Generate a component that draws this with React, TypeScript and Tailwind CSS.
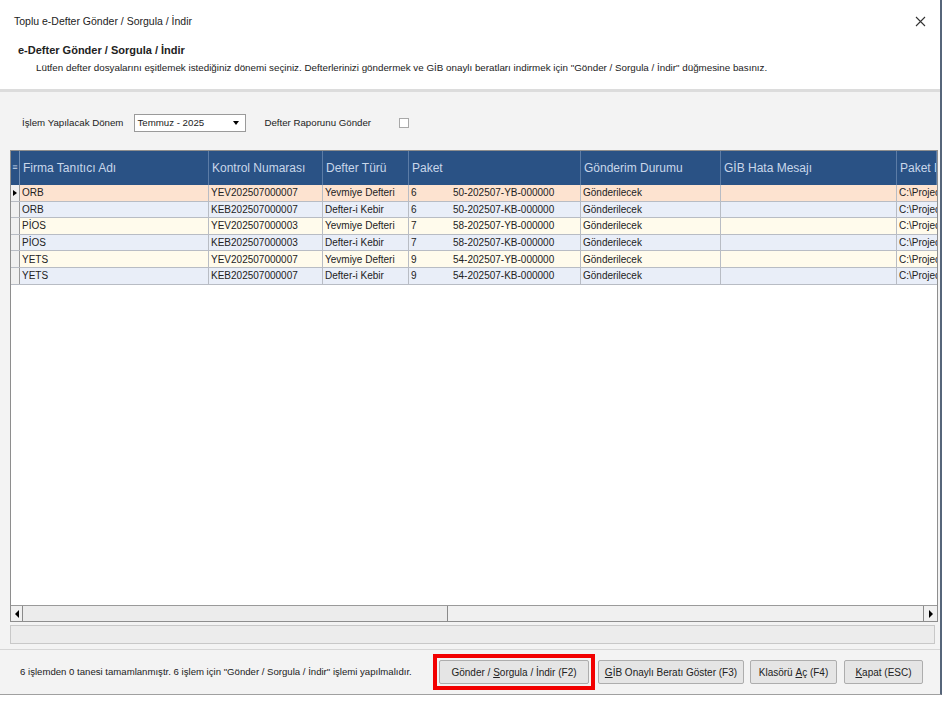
const rows = [
  { firma: "ORB", kontrol: "YEV202507000007", tur: "Yevmiye Defteri", no: "6", paket: "50-202507-YB-000000", bg: "bg-[#fde3d0]", sel: true },
  { firma: "ORB", kontrol: "KEB202507000007", tur: "Defter-i Kebir", no: "6", paket: "50-202507-KB-000000", bg: "bg-[#e9eef8]" },
  { firma: "PİOS", kontrol: "YEV202507000003", tur: "Yevmiye Defteri", no: "7", paket: "58-202507-YB-000000", bg: "bg-[#fffbec]" },
  { firma: "PİOS", kontrol: "KEB202507000003", tur: "Defter-i Kebir", no: "7", paket: "58-202507-KB-000000", bg: "bg-[#e9eef8]" },
  { firma: "YETS", kontrol: "YEV202507000007", tur: "Yevmiye Defteri", no: "9", paket: "54-202507-YB-000000", bg: "bg-[#fffbec]" },
  { firma: "YETS", kontrol: "KEB202507000007", tur: "Defter-i Kebir", no: "9", paket: "54-202507-KB-000000", bg: "bg-[#e9eef8]" },
];

const cols = [
  { title: "Firma Tanıtıcı Adı", w: "w-[189px]" },
  { title: "Kontrol Numarası", w: "w-[114px]" },
  { title: "Defter Türü", w: "w-[86px]" },
  { title: "Paket", w: "w-[172px]" },
  { title: "Gönderim Durumu", w: "w-[140px]" },
  { title: "GİB Hata Mesajı", w: "w-[176px]" },
  { title: "Paket D", w: "flex-1" },
];

function Btn({ children, w }: { children: React.ReactNode; w: string }) {
  return (
    <button className={`${w} h-[24px] border border-[#adadad] bg-[#e5e5e5] rounded-[2px] text-[10px] text-[#222] flex items-center justify-center whitespace-pre`}>
      {children}
    </button>
  );
}

export default function App() {
  return (
    <div className="w-[946px] h-[704px] bg-white overflow-hidden text-[#222]" style={{ fontFamily: '"Liberation Sans", Arial, sans-serif' }}>
      <div className="w-[942px] h-[695px] flex flex-col border-r-2 border-b border-r-[#56657a] border-b-[#a0a0a0]">
        {/* title bar */}
        <div className="h-[42px] flex items-center justify-between pl-[14px] pr-[14px] shrink-0">
          <span className="text-[10.5px] mt-[1px]">Toplu e-Defter Gönder / Sorgula / İndir</span>
          <svg width="11" height="11" viewBox="0 0 11 11">
            <path d="M1 1L10 10M10 1L1 10" stroke="#333" strokeWidth="1.1" />
          </svg>
        </div>
        {/* header */}
        <div className="h-[47px] shrink-0 pl-[18px] flex flex-col">
          <div className="text-[11px] font-bold leading-[14px] mt-[1px]">e-Defter Gönder / Sorgula / İndir</div>
          <div className="text-[9.8px] leading-[12px] pl-[18px] mt-[5px] whitespace-nowrap">
            Lütfen defter dosyalarını eşitlemek istediğiniz dönemi seçiniz. Defterlerinizi göndermek ve GİB onaylı beratları indirmek için "Gönder / Sorgula / İndir" düğmesine basınız.
          </div>
        </div>
        <div className="h-[3px] bg-[#dcdcdc] shrink-0" />
        {/* body */}
        <div className="flex-1 bg-[#f3f3f3] flex flex-col">
          <div className="h-[58px] flex items-center pl-[22px] pt-[4px] text-[9.7px] shrink-0">
            <span>İşlem Yapılacak Dönem</span>
            <div className="ml-[11px] w-[112px] h-[18px] bg-white border border-[#9a9a9a] flex items-center justify-between pl-[2px] pr-[6px]">
              <span>Temmuz - 2025</span>
              <span className="w-0 h-0 border-l-[3.5px] border-r-[3.5px] border-t-[4px] border-l-transparent border-r-transparent border-t-black" />
            </div>
            <span className="ml-[18px]">Defter Raporunu Gönder</span>
            <span className="ml-[28px] w-[10px] h-[10px] border border-[#a8a8a8] bg-white" />
          </div>
          {/* grid */}
          <div className="ml-[10px] mr-[2px] h-[472px] border border-[#8e8e8e] bg-white flex flex-col overflow-hidden shrink-0">
            <div className="h-[34px] bg-[#2a5285] flex shrink-0 text-[#c9d7ea] text-[12px]">
              <div className="w-[9px] border-r border-[#6f8db3] flex items-center justify-center text-[9px]">≡</div>
              {cols.map((c) => (
                <div key={c.title} className={`${c.w} border-r border-[#5c7ca6] flex items-center pl-[3px] whitespace-nowrap overflow-hidden`}>
                  {c.title}
                </div>
              ))}
            </div>
            {rows.map((r, i) => (
              <div key={i} className={`h-[16.6px] flex shrink-0 border-b border-[#b8bcc4] text-[10px] ${r.bg}`}>
                <div className="w-[9px] border-r border-[#9a9a9a] bg-[#f0f0f0] flex items-center justify-center">
                  {r.sel && <span className="w-0 h-0 border-t-[3.5px] border-b-[3.5px] border-l-[4px] border-t-transparent border-b-transparent border-l-black" />}
                </div>
                <div className="w-[189px] border-r border-[#b8bcc4] flex items-center pl-[2px]">{r.firma}</div>
                <div className="w-[114px] border-r border-[#b8bcc4] flex items-center pl-[2px]">{r.kontrol}</div>
                <div className="w-[86px] border-r border-[#b8bcc4] flex items-center pl-[2px]">{r.tur}</div>
                <div className="w-[172px] border-r border-[#b8bcc4] flex items-center pl-[2px]">
                  <span className="w-[42px]">{r.no}</span>
                  <span>{r.paket}</span>
                </div>
                <div className="w-[140px] border-r border-[#b8bcc4] flex items-center pl-[2px]">Gönderilecek</div>
                <div className="w-[176px] border-r border-[#b8bcc4]" />
                <div className="flex-1 flex items-center pl-[2px] whitespace-nowrap overflow-hidden">C:\Projects</div>
              </div>
            ))}
            <div className="flex-1" />
            {/* scrollbar */}
            <div className="h-[16px] shrink-0 flex border-t border-[#9a9a9a] bg-[#f0f0f0]">
              <div className="w-[12px] border-r border-[#8a8a8a] flex items-center justify-center">
                <span className="w-0 h-0 border-t-[4px] border-b-[4px] border-r-[4px] border-t-transparent border-b-transparent border-r-black" />
              </div>
              <div className="w-[425px] border-r border-[#8a8a8a] bg-[#ececec]" />
              <div className="flex-1" />
              <div className="w-[14px] border-l border-[#8a8a8a] flex items-center justify-center">
                <span className="w-0 h-0 border-t-[4px] border-b-[4px] border-l-[4px] border-t-transparent border-b-transparent border-l-black" />
              </div>
            </div>
          </div>
          {/* progress */}
          <div className="ml-[10px] mr-[5px] mt-[3px] h-[19px] border border-[#c8c8c8] bg-[#ececec] shrink-0" />
          <div className="mt-[5px] h-px bg-[#d6d6d6] shrink-0" />
          {/* footer */}
          <div className="flex-1 flex items-center pl-[20px] pr-[17px] text-[9.6px]">
            <span className="flex-1 whitespace-nowrap">6 işlemden 0 tanesi tamamlanmıştr. 6 işlem için "Gönder / Sorgula / İndir" işlemi yapılmalıdır.</span>
            <div className="border-[4px] border-[#f20000] p-[2px] mr-[1px]">
              <Btn w="w-[150px]">
                {"Gönder / "}<span className="underline">S</span>{"orgula / İndir (F2)"}
              </Btn>
            </div>
            <div className="ml-[2px]">
              <Btn w="w-[146px]">
                <span className="underline">G</span>{"İB Onaylı Beratı Göster (F3)"}
              </Btn>
            </div>
            <div className="ml-[6px]">
              <Btn w="w-[87px]">
                {"Klasörü "}<span className="underline">A</span>{"ç (F4)"}
              </Btn>
            </div>
            <div className="ml-[7px]">
              <Btn w="w-[79px]">
                <span className="underline">K</span>{"apat (ESC)"}
              </Btn>
            </div>
          </div>
        </div>
      </div>
    </div>
  );
}
